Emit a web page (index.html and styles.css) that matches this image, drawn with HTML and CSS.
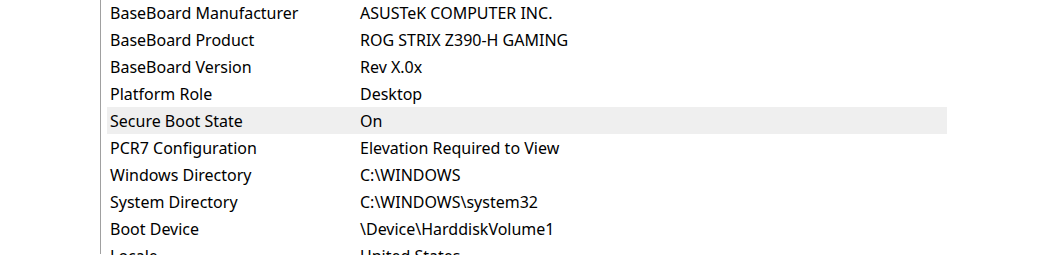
FILE: index.html
```html
<!DOCTYPE html>
<html>
<head>
<meta charset="utf-8">
<link rel="stylesheet" href="styles.css">
</head>
<body>
<div class="pane">
  <div class="list">
    <div class="row"><span class="name">BaseBoard Manufacturer</span><span class="value">ASUSTeK COMPUTER INC.</span></div>
    <div class="row"><span class="name">BaseBoard Product</span><span class="value">ROG STRIX Z390-H GAMING</span></div>
    <div class="row"><span class="name">BaseBoard Version</span><span class="value">Rev X.0x</span></div>
    <div class="row"><span class="name">Platform Role</span><span class="value">Desktop</span></div>
    <div class="row selected"><span class="name">Secure Boot State</span><span class="value">On</span></div>
    <div class="row"><span class="name">PCR7 Configuration</span><span class="value">Elevation Required to View</span></div>
    <div class="row"><span class="name">Windows Directory</span><span class="value">C:\WINDOWS</span></div>
    <div class="row"><span class="name">System Directory</span><span class="value">C:\WINDOWS\system32</span></div>
    <div class="row"><span class="name">Boot Device</span><span class="value">\Device\HarddiskVolume1</span></div>
    <div class="row"><span class="name">Locale</span><span class="value">United States</span></div>
  </div>
</div>
</body>
</html>
```
FILE: styles.css
```css
html, body {
  margin: 0;
  padding: 0;
  background: #ffffff;
  overflow: hidden;
  height: 255px;
}
.pane {
  margin-left: 100px;
  border-left: 1px solid #a0a0a0;
  height: 255px;
  padding-left: 6px;
}
.list {
  width: 840px;
  margin-top: -1px;
  font-family: "Noto Sans", "Open Sans", sans-serif;
  font-size: 16px;
  color: #000000;
}
.row {
  display: flex;
  box-sizing: border-box;
  height: 27px;
  padding-top: 2px;
  line-height: 25px;
}
.row.selected {
  background: #efefef;
}
.name {
  width: 250px;
  padding-left: 3px;
  flex: none;
}
.value {
  flex: 1;
}
```
